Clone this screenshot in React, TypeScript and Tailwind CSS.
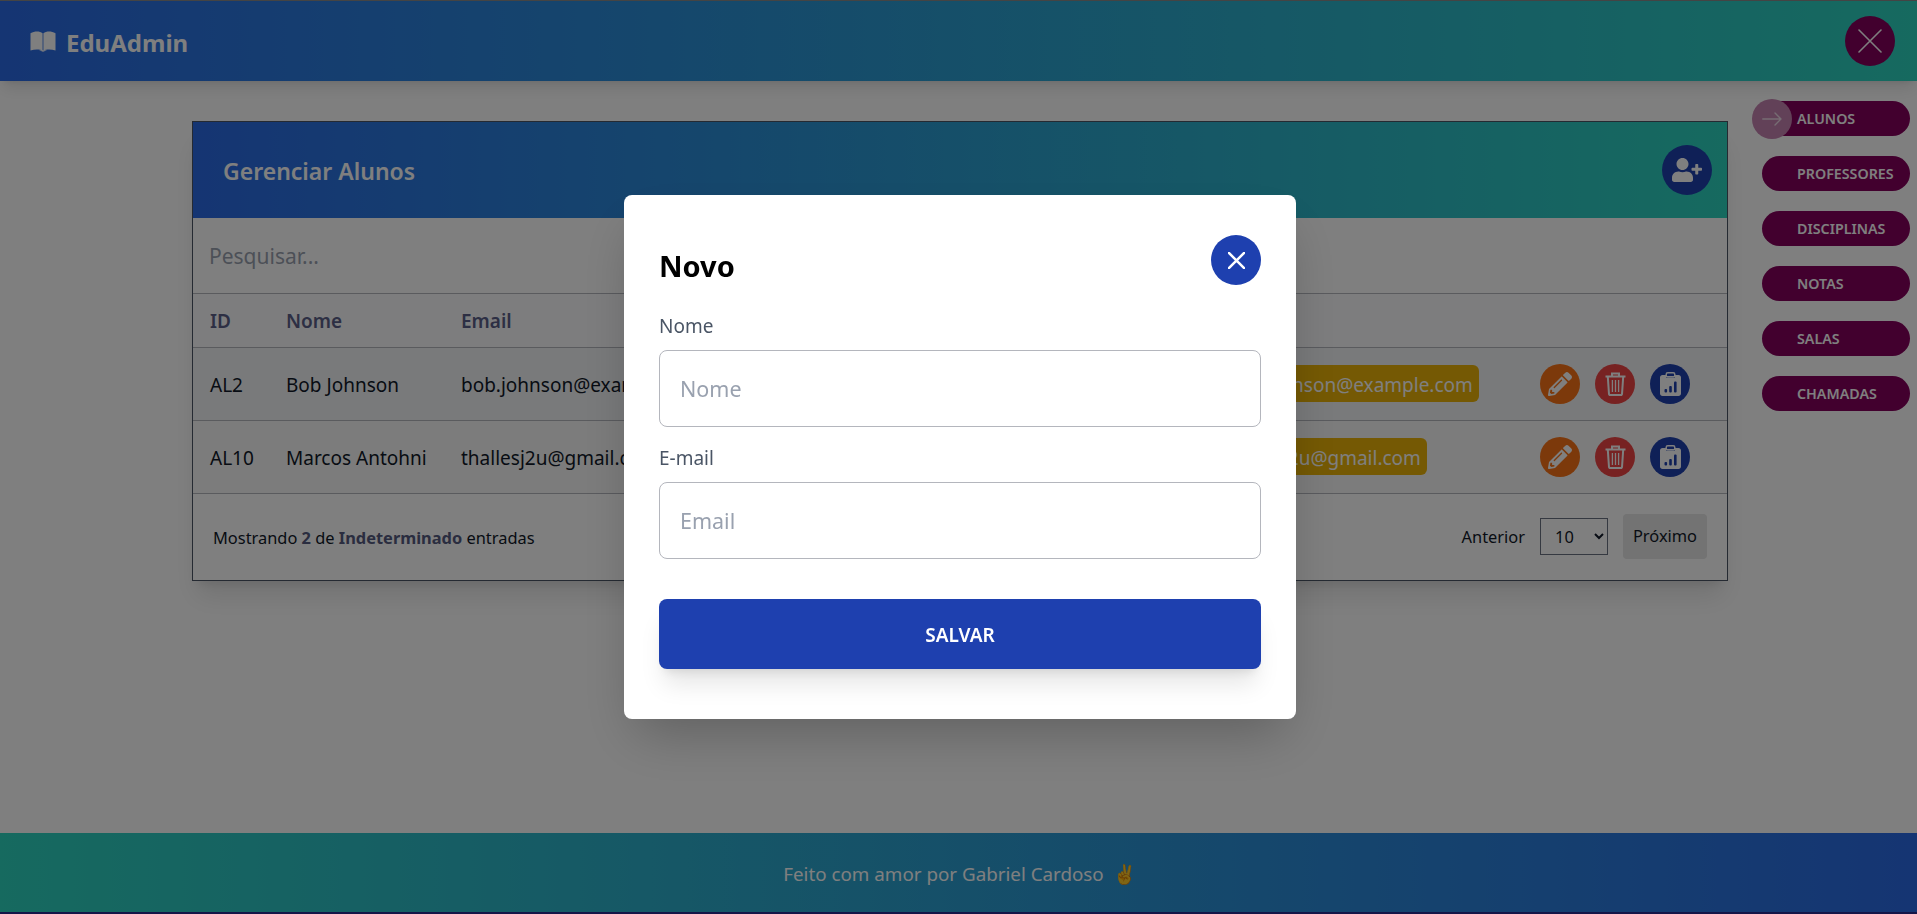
import { FaPencilAlt, FaUserPlus } from 'react-icons/fa';

const links = ['ALUNOS', 'PROFESSORES', 'DISCIPLINAS', 'NOTAS', 'SALAS', 'CHAMADAS'];

const students = [
  { id: 'AL2', name: 'Bob Johnson', email: 'bob.johnson@example.com', stripe: 'bg-[#f3f4f7]' },
  { id: 'AL10', name: 'Marcos Antohni', email: 'thallesj2u@gmail.com', stripe: 'bg-[#f8f8f8]' },
];

function BookIcon() {
  return (
    <svg width="26" height="21" viewBox="0 0 26 21" fill="currentColor">
      <path d="M0.5 2.2C4.5 0.2 9.5 0 12.6 2.2V19.4C9.5 18.2 4.5 18.2 0.5 19.4ZM25.5 2.2C21.5 0.2 16.5 0 13.4 2.2V19.4C16.5 18.2 21.5 18.2 25.5 19.4ZM9 19.2H17L13 20.8Z" />
    </svg>
  );
}

function ThinX({ size, weight }: { size: number; weight: number }) {
  return (
    <svg width={size} height={size} viewBox="0 0 24 24" fill="none" stroke="currentColor" strokeWidth={weight} strokeLinecap="round">
      <path d="M1 1L23 23M23 1L1 23" />
    </svg>
  );
}

function ArrowIcon() {
  return (
    <svg width="20" height="14" viewBox="0 0 20 14" fill="none" stroke="currentColor" strokeWidth="1.4" strokeLinecap="round" strokeLinejoin="round">
      <path d="M0.8 7H19M13 1L19 7L13 13" />
    </svg>
  );
}

function TrashIcon() {
  return (
    <svg width="21" height="24" viewBox="0 0 21 24" fill="none" stroke="currentColor" strokeWidth="2">
      <path d="M0.5 4.6H20.5M7 4.4V1.4H14V4.4" />
      <path d="M2.8 4.8L4 22.2C4.1 22.8 4.5 23.1 5 23.1H16C16.5 23.1 16.9 22.8 17 22.2L18.2 4.8" />
      <path d="M7.4 8V20M10.5 8V20M13.6 8V20" strokeWidth="1.3" />
    </svg>
  );
}

function ReportIcon() {
  return (
    <svg width="21" height="24" viewBox="0 0 21 24">
      <path fill="currentColor" d="M2.5 3H6V5.5H15V3H18.5C19.9 3 21 4.1 21 5.5V21.5C21 22.9 19.9 24 18.5 24H2.5C1.1 24 0 22.9 0 21.5V5.5C0 4.1 1.1 3 2.5 3Z" />
      <rect x="6.2" y="0.8" width="8.6" height="4" rx="1.6" fill="none" stroke="currentColor" strokeWidth="1.5" />
      <rect x="4.5" y="17" width="2.6" height="3.5" rx="1" fill="#1e40af" />
      <rect x="9.2" y="14" width="2.6" height="6.5" rx="1" fill="#1e40af" />
      <rect x="14" y="9.5" width="2.6" height="11" rx="1" fill="#1e40af" />
    </svg>
  );
}

function Navbar() {
  return (
    <nav className="h-[81px] shrink-0 flex items-center justify-between pl-[30px] pr-[22px] border-t border-[#888] bg-linear-to-r/srgb from-[#2a6ae6] to-[#2dd4bf] shadow-lg text-white">
      <div className="flex items-center gap-[10px] text-[24px] font-bold">
        <BookIcon />
        <span className="pt-[3px]">EduAdmin</span>
      </div>
      <button className="w-[50px] h-[50px] rounded-full bg-[#85005c] flex items-center justify-center">
        <ThinX size={24} weight={1.6} />
      </button>
    </nav>
  );
}

function SideNav() {
  return (
    <aside className="relative w-[148px] ml-[34px] mt-[20px] flex flex-col gap-[20px]">
      {links.map((label) => (
        <a key={label} className="h-[35px] rounded-full bg-[#85005c] text-white text-[14.25px] font-semibold pl-[35px] pt-[1px] flex items-center">
          {label}
        </a>
      ))}
      <span className="absolute -left-[10px] -top-[2px] w-[40px] h-[40px] rounded-full bg-[#c482b0] flex items-center justify-center text-white/70">
        <ArrowIcon />
      </span>
    </aside>
  );
}

function StudentsCard() {
  return (
    <section className="w-[1536px] ml-[192px] mt-[40px] border border-gray-600 bg-white shadow-xl">
      <header className="h-[96px] flex items-center justify-between pl-[30px] pr-[15px] bg-linear-to-r/srgb from-[#2a6ae6] to-[#2dd4bf] text-white">
        <h2 className="text-[23px] font-semibold pt-[2px]">Gerenciar Alunos</h2>
        <button className="w-[50px] h-[50px] rounded-full bg-[#1e40af] flex items-center justify-center">
          <FaUserPlus size={30} />
        </button>
      </header>
      <div className="h-[76px] flex items-center px-[16px] pt-[3px] border-b border-[#b4b6bd]">
        <input placeholder="Pesquisar..." className="w-full text-[21px] outline-none placeholder:text-gray-400" />
      </div>
      <table className="w-full table-fixed border-collapse text-[19px] text-gray-900">
        <colgroup>
          <col className="w-[76px]" />
          <col className="w-[175px]" />
          <col className="w-[757px]" />
          <col className="w-[322px]" />
          <col />
        </colgroup>
        <thead>
          <tr className="h-[53px] bg-[#fbfbfc] text-left text-[#5a5f88] border-b border-[#b4b6bd]">
            <th className="pl-[17px] pt-[1px] font-semibold">ID</th>
            <th className="pl-[17px] pt-[1px] font-semibold">Nome</th>
            <th className="pl-[17px] pt-[1px] font-semibold">Email</th>
            <th></th>
            <th></th>
          </tr>
        </thead>
        <tbody>
          {students.map((s) => (
            <tr key={s.id} className={`h-[73px] border-b border-[#b4b6bd] ${s.stripe}`}>
              <td className="pl-[17px] pt-[4px]">{s.id}</td>
              <td className="pl-[17px] pt-[4px]">{s.name}</td>
              <td className="pl-[17px] pt-[4px]">{s.email}</td>
              <td className="pl-[17px]">
                <span className="inline-flex h-[37px] items-center px-[6px] pt-[3px] rounded-md bg-[#eab308] text-white">{s.email}</span>
              </td>
              <td className="pl-[17px]">
                <div className="flex gap-[15px]">
                  <button className="w-[40px] h-[40px] rounded-full bg-[#f97316] text-white flex items-center justify-center">
                    <FaPencilAlt size={24} />
                  </button>
                  <button className="w-[40px] h-[40px] rounded-full bg-[#ef4444] text-white flex items-center justify-center">
                    <TrashIcon />
                  </button>
                  <button className="w-[40px] h-[40px] rounded-full bg-[#1e40af] text-white flex items-center justify-center">
                    <ReportIcon />
                  </button>
                </div>
              </td>
            </tr>
          ))}
        </tbody>
      </table>
      <div className="h-[86px] flex items-center justify-between pl-[20px] pr-[20px] text-[16.4px] text-gray-900">
        <p className="pt-[3px]">
          Mostrando <b className="font-bold text-[#555a80]">2</b> de <b className="font-bold text-[#555a80]">Indeterminado</b> entradas
        </p>
        <div className="flex items-center gap-[15px]">
          <span className="pt-[2px]">Anterior</span>
          <select className="w-[68px] h-[37px] border border-gray-500 pl-[10px] bg-white">
            <option>10</option>
          </select>
          <button className="h-[45px] w-[84px] rounded bg-[#e6e6e6]">Próximo</button>
        </div>
      </div>
    </section>
  );
}

function Field({ label, placeholder }: { label: string; placeholder: string }) {
  return (
    <label className="block">
      <span className="block text-[19px] leading-[22px] text-gray-600">{label}</span>
      <input
        placeholder={placeholder}
        className="mt-[13px] w-full h-[77px] px-[20px] rounded-lg border border-[#b4b6bd] text-[21.5px] outline-none placeholder:text-gray-400"
      />
    </label>
  );
}

function NewModal() {
  return (
    <div className="fixed inset-0 z-50 bg-black/50 flex items-center justify-center pl-[3px]">
      <div className="w-[672px] h-[524px] rounded-lg bg-white px-[35px] pt-[40px] shadow-2xl">
        <div className="flex items-start justify-between h-[80px]">
          <h3 className="text-[29px] font-bold text-black mt-[11px] leading-[40px]">Novo</h3>
          <button className="w-[50px] h-[50px] rounded-full bg-[#1e40af] text-white flex items-center justify-center">
            <ThinX size={17} weight={3.5} />
          </button>
        </div>
        <Field label="Nome" placeholder="Nome" />
        <div className="h-[20px]" />
        <Field label="E-mail" placeholder="Email" />
        <button className="mt-[40px] w-full h-[70px] pt-[3px] rounded-lg bg-[#1e40af] text-white text-[19px] font-semibold shadow-xl">SALVAR</button>
      </div>
    </div>
  );
}

export default function App() {
  return (
    <div className="h-[914px] flex flex-col bg-white overflow-hidden font-['Noto_Sans','Liberation_Sans',sans-serif]">
      <Navbar />
      <main className="flex-1 flex items-start">
        <StudentsCard />
        <SideNav />
      </main>
      <footer className="h-[81px] shrink-0 flex items-center justify-center gap-[9px] pt-[3px] pl-[2px] bg-linear-to-r/srgb from-[#2dd4bf] to-[#2a6ae6] border-b-2 border-[#2a2a90] text-white text-[18.8px]">
        Feito com amor por Gabriel Cardoso <span>✌️</span>
      </footer>
      <NewModal />
    </div>
  );
}
